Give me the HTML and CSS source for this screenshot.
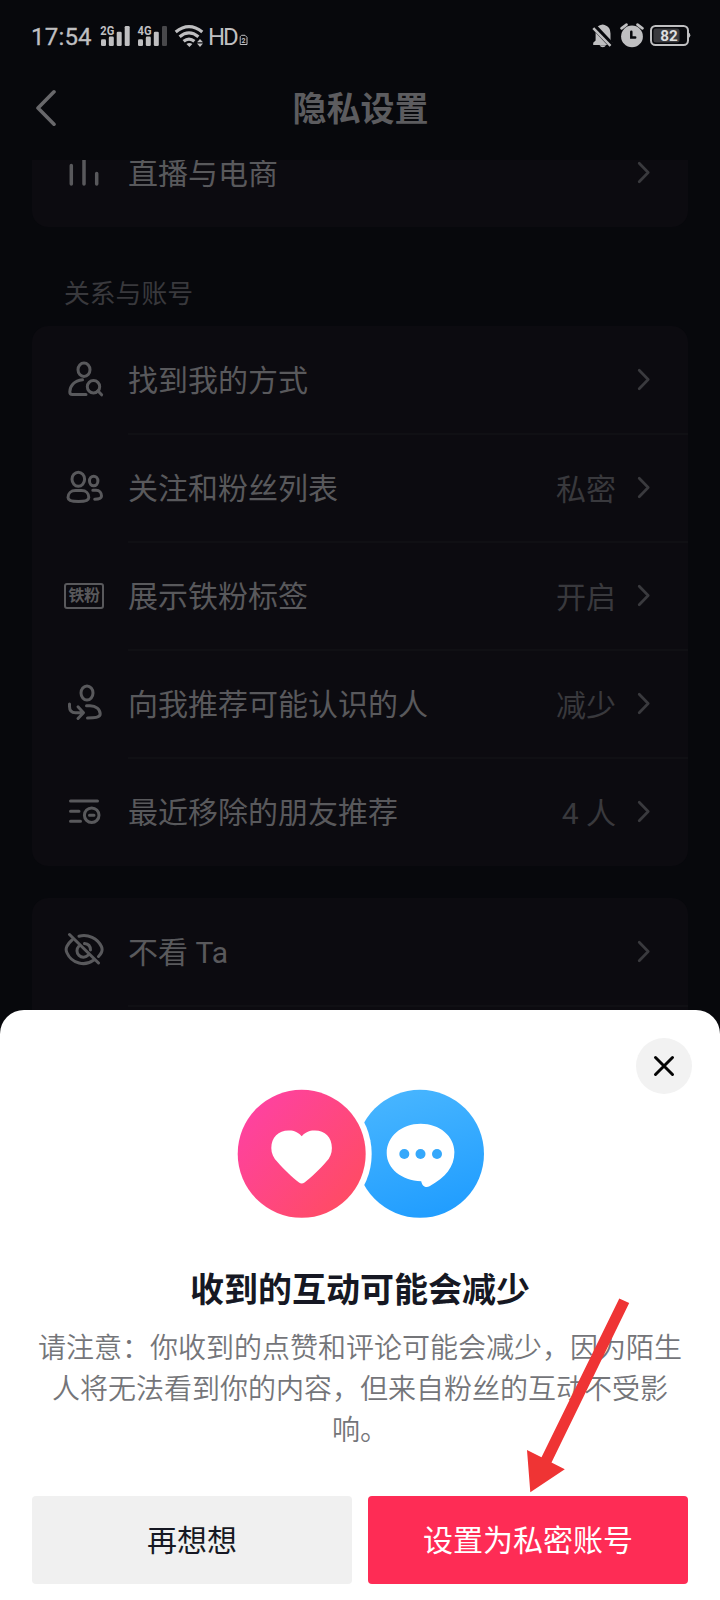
FILE: index.html
```html
<!DOCTYPE html>
<html lang="zh-CN">
<head>
<meta charset="utf-8">
<title>隐私设置</title>
<link rel="stylesheet" href="styles.css">
</head>
<body>
<svg class="defs" width="0" height="0" aria-hidden="true">
  <symbol id="chevron" viewBox="0 0 16 26"><path d="M3.2 3.2 12.200 12.500 3.200 21.800"/></symbol>
</svg>
<div class="phone">
  <header class="status">
    <span class="time">17:54</span>
    <svg class="signal" viewBox="100 24 31 24" width="31" height="24"><text x="100.3" y="34.6" textLength="14" lengthAdjust="spacingAndGlyphs">2G</text><rect x="101" y="39.3" width="5" height="6.7" rx="1.3"/><rect x="108.8" y="36.6" width="5" height="9.4" rx="1.3"/><rect x="116.7" y="31.7" width="5" height="14.3" rx="1.3"/><rect x="124.7" y="26" width="5" height="20" rx="1.3"/></svg>
    <svg class="signal second" viewBox="137 24 31 24" width="31" height="24"><text x="137.6" y="34.6" textLength="14" lengthAdjust="spacingAndGlyphs">4G</text><rect x="138" y="39.3" width="5" height="6.7" rx="1.3"/><rect x="145.8" y="36.6" width="5" height="9.4" rx="1.3"/><rect x="153.8" y="31.7" width="5" height="14.3" rx="1.3"/><rect class="dim" x="162" y="26" width="5" height="20" rx="1.3"/></svg>
    <svg class="wifi" viewBox="174 23 31 25" width="31" height="25"><g fill="none" stroke="#bfbfc1" stroke-width="3.200"><path d="M175.7 31.9Q189 21.2 202.3 31.9"/><path d="M179.6 36.7Q189 29 198.4 36.7"/><path d="M183.6 41.3Q189 36.8 194.4 41.3"/></g><path d="M186.4 43.9q3-1.8 6 0l-3 3zM197 42.2l3-3.3 3 3.3zM197 43.6l3 3.3 3-3.3z"/></svg>
    <span class="hd">HD</span>
    <svg class="sim" viewBox="238.500 34 9 12" width="9" height="12"><path d="M241 35.300h3.500l2 2v7.200h-6.800v-7.800z" fill="none" stroke="#bfbfc1" stroke-width="1"/><text x="241" y="43.200">2</text></svg>
    <span class="grow"></span>
    <svg class="bell" viewBox="591 23 22 26" width="22" height="26"><path d="M597.500 26.500q2-1.300 3.200-1.500 2-1.200 4 0 5.800 1.600 5.800 8.500v7.300l2 2v2.200h-19.300v-2.200l2.400-2.300v-9zM599.500 45.300h6.500q-1 2-3.200 2t-3.300-2z"/><path d="M594 26.500 612 45.800" stroke="#07080c" stroke-width="6"/><path d="M593.300 28.200 610.500 45.800" stroke="#bfbfc1" stroke-width="2.500"/></svg>
    <svg class="alarm" viewBox="619 22 26 26" width="26" height="26"><circle cx="632" cy="36.400" r="10.900"/><g fill="none" stroke-linecap="round"><path d="M621.500 28.300 626.500 24.600M642.500 28.300 637.500 24.600" stroke="#bfbfc1" stroke-width="2.700"/><path d="M631.300 31.800V37.500H635.200" stroke="#07080c" stroke-width="2.500"/></g></svg>
    <svg class="battery" viewBox="649 24 42 23" width="42" height="23"><rect x="651" y="26" width="37" height="19" rx="4.500" fill="none" stroke="#bfbfc1" stroke-width="2"/><rect x="653.500" y="28.500" width="26" height="14" rx="2.500" fill="#3a3a3e"/><path d="M688.500 32.500q1.800.5 1.800 2.800t-1.800 2.800z"/><text x="660.200" y="41" textLength="17.500" lengthAdjust="spacingAndGlyphs">82</text></svg>
  </header>
  <nav class="navbar">
    <svg class="back" viewBox="0 0 24 40" width="24" height="40"><path d="M22 3.800 6 20 22 36.200"/></svg>
    <h1>隐私设置</h1>
  </nav>
  <main class="settings">
    <section class="card clipped">
      <div class="row">
        <svg class="icon" viewBox="0 0 40 40"><path d="M7.300 12.500V31M20 5V31M32.700 20.500V31" stroke-width="3.500"/></svg>
        <span class="label">直播与电商</span>
        <svg class="chevron"><use href="#chevron"/></svg>
      </div>
    </section>
    <h2>关系与账号</h2>
    <section class="card">
      <div class="row">
        <svg class="icon" viewBox="0 0 40 40"><ellipse cx="20" cy="9.700" rx="6" ry="6.700"/><path d="M18.500 19.800C10 20.500 5.800 26.500 5.800 32q0 2.500 2.500 2.500H22"/><circle cx="29.500" cy="26.800" r="6.200"/><path d="m33.800 30.800 3.800 4"/></svg>
        <span class="label">找到我的方式</span>
        <svg class="chevron"><use href="#chevron"/></svg>
      </div>
      <div class="row">
        <svg class="icon" viewBox="0 0 40 40"><ellipse cx="14.300" cy="11.300" rx="6.300" ry="7"/><path d="M11.500 22.600H17.500C22 22.600 24.800 25.500 24.800 29.500 24.800 32.800 20 33.500 14.500 33.500S4 32.800 4 29.500C4 25.500 7 22.600 11.500 22.600Z"/><ellipse cx="29.700" cy="13" rx="4.200" ry="4.800"/><path d="M28.800 22.300H32C35.500 22.300 37.500 25 37.500 28 37.500 31 34 31.200 30.700 31.300"/></svg>
        <span class="label">关注和粉丝列表</span><span class="value">私密</span>
        <svg class="chevron"><use href="#chevron"/></svg>
      </div>
      <div class="row">
        <span class="icon badge">铁粉</span>
        <span class="label">展示铁粉标签</span><span class="value">开启</span>
        <svg class="chevron"><use href="#chevron"/></svg>
      </div>
      <div class="row">
        <svg class="icon" viewBox="0 0 40 40"><ellipse cx="23" cy="9" rx="6" ry="7"/><path d="M5.500 20V22.500Q5.500 28.700 11.500 28.700H18.500M14 22.800 19.500 28.700 14 34.500M22.500 21.800H26C32 21.800 36.200 25.500 36.200 30 36.200 33.700 30 34 23.500 34"/></svg>
        <span class="label">向我推荐可能认识的人</span><span class="value">减少</span>
        <svg class="chevron"><use href="#chevron"/></svg>
      </div>
      <div class="row">
        <svg class="icon" viewBox="0 0 40 40"><path d="M6.500 9H33.500M6.500 19.300H15M6.500 29.300H16.500M25.500 23.200H30"/><circle cx="27.700" cy="23.200" r="7.300"/></svg>
        <span class="label">最近移除的朋友推荐</span><span class="value">4 人</span>
        <svg class="chevron"><use href="#chevron"/></svg>
      </div>
    </section>
    <section class="card last">
      <div class="row">
        <svg class="icon" viewBox="0 0 40 40"><path d="M8 8Q4.500 11 2.800 14.500 1.500 17.500 2.800 20.500C8 32.500 21.500 34 29 28.500M15 4.300C24 1.800 33.500 6.500 37.400 14.500Q38.800 17.500 37.400 20.500 36.500 22.500 34.500 24.500M14.800 14.300A6.400 6.400 0 0 0 24 23.200M20.500 11.600Q26.400 12.200 26.500 18M5.500 2.500 34.500 31"/></svg>
        <span class="label">不看 Ta</span>
        <svg class="chevron"><use href="#chevron"/></svg>
      </div>
      <div class="row"></div>
    </section>
  </main>

  <section class="sheet" role="dialog">
    <button class="close" aria-label="关闭"><svg viewBox="0 0 56 56" width="56" height="56"><path d="M19.500 19.500 36.500 36.500M36.500 19.500 19.500 36.500"/></svg></button>
    <svg class="hero" viewBox="235 1087 250 134" width="250" height="134">
      <defs>
        <linearGradient id="pink" x1=".1" y1=".2" x2=".85" y2=".85"><stop stop-color="#fe429e"/><stop offset="1" stop-color="#ff4b66"/></linearGradient>
        <linearGradient id="blue" x1=".35" y1="0" x2=".65" y2="1"><stop stop-color="#47b5ff"/><stop offset="1" stop-color="#209dff"/></linearGradient>
      </defs>
      <circle cx="420" cy="1153.800" r="64" fill="url(#blue)"/>
      <circle cx="301.700" cy="1153.800" r="70" fill="#fff"/>
      <circle cx="301.700" cy="1153.800" r="64" fill="url(#pink)"/>
      <path fill="#fff" d="M301.700 1136.200C307 1130.500 311.500 1130.500 315 1130.500 325 1130.500 331.900 1137.500 331.900 1148 331.900 1153.500 330 1158 326 1162 320 1169 311 1177.500 304.500 1182.500Q301.700 1184.500 299 1182.500C292.500 1177.500 283.500 1169 277.500 1162 273.500 1158 271.300 1153.500 271.300 1148 271.300 1137.500 278.500 1130.500 288.500 1130.500 292 1130.500 296.500 1130.500 301.700 1136.200Z"/>
      <path fill="#fff" d="M420.700 1123.700C439.500 1123.700 454.400 1136 454.400 1152 454.400 1167 445.500 1177.500 429.500 1186.200 426.500 1187.700 422.500 1187.200 421.200 1181.200 401.500 1180.500 386.700 1168.500 386.700 1153 386.700 1136.500 401.500 1123.700 420.700 1123.700Z"/>
      <g fill="#35a8fb"><circle cx="404.300" cy="1154" r="5"/><circle cx="420.500" cy="1154" r="5"/><circle cx="437" cy="1154" r="5"/></g>
    </svg>
    <h3>收到的互动可能会减少</h3>
    <p>请注意：你收到的点赞和评论可能会减少，因为陌生<br>人将无法看到你的内容，但来自粉丝的互动不受影<br>响。</p>
    <div class="actions"><button class="secondary">再想想</button><button class="primary">设置为私密账号</button></div>
    <svg class="pointer" viewBox="526 1297 104 196" width="104" height="196"><path d="M619.300 1298.500 629.200 1303 551.500 1462.500 564.800 1469.200 530.300 1492.300 527 1450 541.500 1457.200Z"/></svg>
  </section>
</div>
</body>
</html>
```
FILE: styles.css
```css
* { box-sizing: border-box; }
body { margin: 0; background: #07080c; font-family: Roboto, "Noto Sans CJK SC", sans-serif; }
h1, h2, h3, p { margin: 0; }
button { border: 0; padding: 0; font: inherit; }
svg { display: block; flex: none; }
.defs { position: absolute; }
.phone { position: relative; display: flex; flex-direction: column; width: 720px; height: 1600px; overflow: hidden; background: #07080c; }

.status { display: flex; height: 72px; padding: 0 29px 0 31px; color: #bfbfc1; fill: #bfbfc1; font-size: 24px; line-height: 28px; }
.status svg { margin-top: 24px; }
.status span { margin-top: 23px; }
.time { width: 69px; font-weight: 400; letter-spacing: 0.2px; -webkit-text-stroke: 0.3px #bfbfc1; }
.signal text { font: 700 12px Roboto, sans-serif; }
.signal .dim { fill: #48484b; }
.signal.second { margin-left: 6px; }
.status .wifi { margin: 23px 0 0 6px; }
.hd { width: 30px; margin-left: 3px; font-weight: 400; letter-spacing: -2px; }
.status .sim { margin: 34px 0 0 .5px; }
.sim text { font: 700 7px Roboto, sans-serif; }
.grow { flex: 1; }
.status .bell { margin: 23px 6px 0 0; }
.status .alarm { margin: 22px 4px 0 0; }
.battery text { font: 700 15.5px Roboto, sans-serif; fill: #dededf; }

.navbar { display: flex; align-items: center; height: 88px; padding: 0 32px 16px; }
.back { fill: none; stroke: #68686b; stroke-width: 3.6; stroke-linecap: round; stroke-linejoin: round; }
.navbar h1 { flex: 1; margin: 2px 23px 0 0; text-align: center; font-size: 34px; line-height: 44px; font-weight: 700; color: #5c5c5f; }

.settings { flex: 1; overflow: hidden; padding: 0 32px; }
.card { border-radius: 16px; background: #0c0b10; }
.card.clipped { margin-top: -41px; }
.card.last { margin-top: 32px; }
.row { position: relative; display: flex; align-items: center; height: 108px; padding: 0 36px 0 32px; color: #59595c; font-size: 30px; line-height: 44px; }
.row + .row::before { content: ""; position: absolute; top: -1px; left: 96px; right: 0; height: 2px; background: #101014; }
.icon { width: 40px; height: 40px; margin-right: 24px; fill: none; stroke: #59595c; stroke-width: 3; stroke-linecap: round; stroke-linejoin: round; }
.badge { height: 26px; margin-top: -1px; border: 2px solid #59595c; border-radius: 3px; text-align: center; font-size: 16px; font-weight: 700; line-height: 22px; letter-spacing: -0.5px; white-space: nowrap; }
.label { flex: 1; margin-top: 2px; }
.value { margin: 3px 20px 0 0; color: #39393d; }
.chevron { width: 16px; height: 26px; fill: none; stroke: #3a3a3e; stroke-width: 2.7; stroke-linecap: round; stroke-linejoin: round; }
.settings h2 { padding: 47px 0 12px 32px; font-size: 25.8px; line-height: 40px; font-weight: 400; color: #39393d; }

.sheet { position: absolute; left: 0; bottom: 0; display: flex; flex-direction: column; align-items: center; width: 720px; height: 590px; padding: 77px 32px 16px; border-radius: 24px 24px 0 0; background: #fff; }
.close { position: absolute; top: 28px; right: 28px; width: 56px; height: 56px; border-radius: 50%; background: #f2f2f2; }
.close path { stroke: #050505; stroke-width: 3; stroke-linecap: round; }
.sheet h3 { margin-top: 44px; font-size: 34px; line-height: 50px; font-weight: 700; color: #161823; }
.sheet p { margin-top: 13px; font-size: 28px; line-height: 41px; font-weight: 350; color: #747579; text-align: center; white-space: nowrap; }
.actions { display: grid; grid-template-columns: 1fr 1fr; gap: 16px; width: 100%; margin-top: auto; }
.actions button { height: 88px; padding-top: 2px; border-radius: 4px; font-size: 30px; line-height: 44px; }
.secondary { background: #f0f0f0; color: #161823; }
.primary { background: #fe2c55; color: #fff; }
.pointer { position: absolute; left: 526px; top: 287px; fill: #ef3434; }
```
